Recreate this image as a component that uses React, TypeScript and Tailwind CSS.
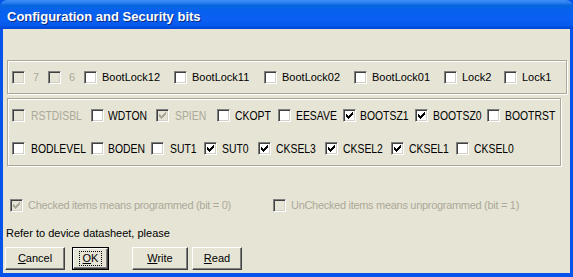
import React from "react";

const FACE = "bg-[#e6e5d5]";

function Check({ color }: { color: string }) {
  const tops = [2, 3, 4, 3, 2, 1, 0];
  return (
    <svg className="absolute left-0 top-0" width={11} height={11} viewBox="0 0 11 11" shapeRendering="crispEdges">
      {tops.map((t, i) => (
        <rect key={i} x={2 + i} y={2 + t} width={1} height={3} fill={color} />
      ))}
    </svg>
  );
}

function CB({ checked = false, disabled = false }: { checked?: boolean; disabled?: boolean }) {
  return (
    <span
      className={`relative inline-block w-[13px] h-[13px] shrink-0 border border-t-[#808080] border-l-[#808080] border-b-white border-r-white shadow-[inset_1px_1px_0_#404040,inset_-1px_-1px_0_#d4d0c8] ${
        disabled ? "bg-[#e6e5d5]" : "bg-white"
      }`}
    >
      {checked && <Check color={disabled ? "#aca899" : "#000"} />}
    </span>
  );
}

type Item = { label: string; w: number; gap: number; checked?: boolean; disabled?: boolean };

const row1: Item[] = [
  { label: "7", w: 36, gap: 8, disabled: true },
  { label: "6", w: 36, gap: 8, disabled: true },
  { label: "BootLock12", w: 90, gap: 5 },
  { label: "BootLock11", w: 90, gap: 5 },
  { label: "BootLock02", w: 90, gap: 5 },
  { label: "BootLock01", w: 90, gap: 5 },
  { label: "Lock2", w: 60, gap: 5 },
  { label: "Lock1", w: 60, gap: 5 },
];

const row2: Item[] = [
  { label: "RSTDISBL", w: 79, gap: 6, disabled: true },
  { label: "WDTON", w: 65, gap: 4 },
  { label: "SPIEN", w: 61, gap: 6, disabled: true, checked: true },
  { label: "CKOPT", w: 61, gap: 5 },
  { label: "EESAVE", w: 65, gap: 5 },
  { label: "BOOTSZ1", w: 72, gap: 4, checked: true },
  { label: "BOOTSZ0", w: 72, gap: 5, checked: true },
  { label: "BOOTRST", w: 70, gap: 5 },
];

const row3: Item[] = [
  { label: "BODLEVEL", w: 79, gap: 6 },
  { label: "BODEN", w: 60, gap: 4 },
  { label: "SUT1", w: 53, gap: 6 },
  { label: "SUT0", w: 54, gap: 5, checked: true },
  { label: "CKSEL3", w: 67, gap: 5, checked: true },
  { label: "CKSEL2", w: 66, gap: 5, checked: true },
  { label: "CKSEL1", w: 65, gap: 5, checked: true },
  { label: "CKSEL0", w: 70, gap: 5 },
];

function Row({ items, narrow }: { items: Item[]; narrow?: boolean }) {
  return (
    <div className="flex items-center">
      {items.map((it) => (
        <div key={it.label} className="flex items-center shrink-0" style={{ width: it.w }}>
          <CB checked={it.checked} disabled={it.disabled} />
          <span
            className={`inline-block whitespace-nowrap ${
              narrow
                ? "text-[13px] leading-[14px] origin-left scale-x-[0.8]"
                : "text-[11px] leading-[13px]"
            } ${it.disabled ? "text-[#aca899]" : "text-black"}`}
            style={{ marginLeft: it.gap }}
          >
            {it.label}
          </span>
        </div>
      ))}
    </div>
  );
}

function Btn({ children, w, def }: { children: React.ReactNode; w: number; def?: boolean }) {
  const inner = (
    <div
      className={`h-full flex items-center justify-center border border-t-white border-l-white border-r-[#404040] border-b-[#404040] shadow-[inset_-1px_-1px_0_#808080] ${FACE} text-[11px] text-black`}
    >
      {def ? (
        <span className="border border-dotted border-black px-[3px] leading-[13px]">{children}</span>
      ) : (
        <span className="leading-[13px]">{children}</span>
      )}
    </div>
  );
  return (
    <div className={`h-[23px] shrink-0 ${def ? "border border-black" : ""}`} style={{ width: w }}>
      {inner}
    </div>
  );
}

export default function App() {
  return (
    <div className="w-[573px] h-[277px] flex flex-col bg-[#0553e8] font-['Liberation_Sans',Arial,sans-serif] overflow-hidden">
      <div className="h-[29px] shrink-0 flex items-center pl-[7px] rounded-t-[7px] bg-[linear-gradient(180deg,#3f8ef4_0%,#2a7ff0_10%,#0866dc_18%,#0761ee_35%,#0a5ff2_70%,#0558ec_88%,#0043d2_100%)]">
        <span className="text-white font-bold text-[13px] leading-[15px] [text-shadow:1px_1px_0_#0a2a80] pt-[3px]">
          Configuration and Security bits
        </span>
      </div>
      <div className={`flex-1 mx-[3px] mb-[4px] ${FACE} flex flex-col`}>
        <div className="ml-[4px] mt-[31px] w-[560px] h-[34px] border border-[#aca899] shadow-[inset_1px_1px_0_#fff,1px_1px_0_#fff] flex items-center pl-[4px]">
          <Row items={row1} />
        </div>
        <div className="ml-[4px] mt-[4px] w-[554px] h-[68px] border border-[#aca899] shadow-[inset_1px_1px_0_#fff,1px_1px_0_#fff] flex flex-col pl-[4px]">
          <div className="h-[33px] flex items-center">
            <Row items={row2} narrow />
          </div>
          <div className="h-[33px] flex items-center">
            <Row items={row3} narrow />
          </div>
        </div>
        <div className="mt-[33px] h-[13px] flex items-center">
          <div className="flex items-center w-[270px] pl-[7px]">
            <CB checked disabled />
            <span className="ml-[5px] text-[11px] leading-[13px] text-[#aca899] whitespace-nowrap tracking-[-0.3px]">
              Checked items means programmed (bit = 0)
            </span>
          </div>
          <div className="flex items-center">
            <CB disabled />
            <span className="ml-[5px] text-[11px] leading-[13px] text-[#aca899] whitespace-nowrap tracking-[-0.3px]">
              UnChecked items means unprogrammed (bit = 1)
            </span>
          </div>
        </div>
        <div className="mt-[15px] h-[13px] pl-[3px] text-[11px] leading-[13px] text-black whitespace-nowrap">
          Refer to device datasheet, please
        </div>
        <div className="mt-[7px] flex pl-[2px]">
          <Btn w={60}>
            <u>C</u>ancel
          </Btn>
          <div className="ml-[7px]">
            <Btn w={37} def>
              <u>O</u>K
            </Btn>
          </div>
          <div className="ml-[23px]">
            <Btn w={56}>
              <u>W</u>rite
            </Btn>
          </div>
          <div className="ml-[4px]">
            <Btn w={50}>
              <u>R</u>ead
            </Btn>
          </div>
        </div>
      </div>
    </div>
  );
}
